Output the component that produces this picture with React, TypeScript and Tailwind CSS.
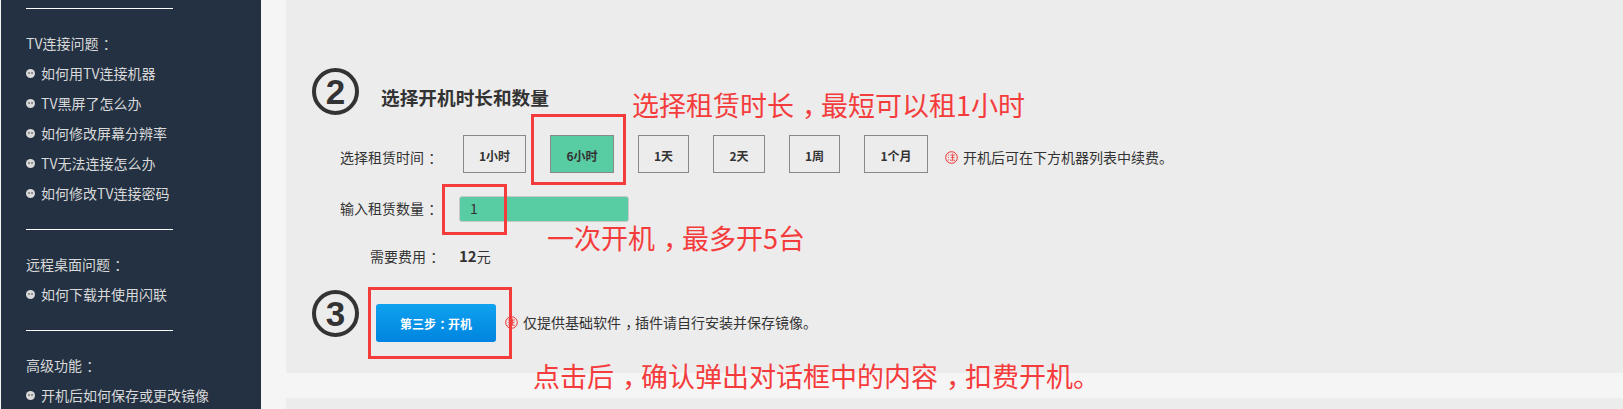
import React from "react";

const cjk = "font-['Microsoft_YaHei','Noto_Sans_CJK_SC','Noto_Sans',sans-serif]";

const sideGroups = [
  {
    title: "TV连接问题：",
    items: ["如何用TV连接机器", "TV黑屏了怎么办", "如何修改屏幕分辨率", "TV无法连接怎么办", "如何修改TV连接密码"],
  },
  { title: "远程桌面问题：", items: ["如何下载并使用闪联"] },
  { title: "高级功能：", items: ["开机后如何保存或更改镜像"] },
];

const durations = [
  { label: "1小时", width: "w-[63px]", margin: "mr-[24px]" },
  { label: "6小时", width: "w-[64px]", margin: "mr-[24px]", active: true },
  { label: "1天", width: "w-[51px]", margin: "mr-[24px]" },
  { label: "2天", width: "w-[52px]", margin: "mr-[24px]" },
  { label: "1周", width: "w-[51px]", margin: "mr-[24px]" },
  { label: "1个月", width: "w-[64px]", margin: "mr-[17px]" },
];

// the reference's font sets ，and ： in the middle of their cell
const Punct = ({ text }: { text: string }) => (
  <>
    {text.split(/([，：])/).map((part, i) =>
      part === "，" || part === "：" ? (
        <span key={i} className="inline-block translate-x-[0.3em]">
          {part}
        </span>
      ) : (
        part
      ),
    )}
  </>
);

const NoteIcon = () => (
  <svg width="13" height="13" viewBox="0 0 13 13" className="shrink-0">
    <circle cx="6.5" cy="6.5" r="5.8" fill="none" stroke="#ef2d2d" strokeWidth="1" />
    <path
      d="M3 3.6l1 .8M2.8 6l1 .7M3 9.6l1-1.4M5.4 4h4.4M5.7 6.4h3.8M5 9.2h5M7.6 4v5.2M7 2.6l1 .8"
      stroke="#ef2d2d"
      strokeWidth="0.8"
      fill="none"
    />
  </svg>
);

const StepCircle = ({ n }: { n: number }) => (
  <div className="flex h-[47px] w-[47px] shrink-0 items-center justify-center rounded-full border-[4px] border-[#333] font-['Liberation_Sans',sans-serif] text-[35px] font-bold leading-none text-[#333]">
    {n}
  </div>
);

export default function App() {
  return (
    <div className={`relative flex h-[409px] w-[1623px] overflow-hidden bg-[#f5f5f5] text-[14px] ${cjk}`}>
      <aside className="ml-px h-full w-[260px] shrink-0 overflow-hidden bg-[#233142] pl-[25px] text-[#d9d9d9]">
        {sideGroups.map((group) => (
          <div key={group.title}>
            <div className="mt-[8px] mb-[20px] h-px w-[147px] bg-white" />
            <div className="h-[29px] leading-[29px]">
              <Punct text={group.title} />
            </div>
            {group.items.map((item) => (
              <div key={item} className="flex h-[30px] items-center">
                <span className="mr-[6px] flex h-[9px] w-[9px] items-center justify-center gap-px rounded-full bg-[#d9d9d9]">
                  <span className="h-[2px] w-[2px] rounded-full bg-[#777]" />
                  <span className="h-[2px] w-[2px] rounded-full bg-[#777]" />
                </span>
                {item}
              </div>
            ))}
            <div className="h-[13px]" />
          </div>
        ))}
      </aside>

      <main className="ml-[25px] flex-1">
        <section className="h-[373px] bg-[#ececec] pt-[68px] pl-[26px] text-[#333]">
          <div className="flex items-center">
            <StepCircle n={2} />
            <h2 className="ml-[22px] mt-[11px] text-[18.67px] font-bold leading-none">选择开机时长和数量</h2>
          </div>

          <div className="mt-[20px] flex h-[38px] items-center">
            <label className="ml-[28px] w-[123px] pt-[7px]">
              <Punct text="选择租赁时间：" />
            </label>
            {durations.map((d) => (
              <button
                key={d.label}
                className={`flex h-[38px] items-center justify-center border border-[#888] pt-[4px] text-[12px] font-bold ${d.width} ${d.margin} ${d.active ? "bg-[#58cca2]" : ""}`}
              >
                {d.label}
              </button>
            ))}
            <span className="flex items-center pt-[7px]">
              <NoteIcon />
              <span className="ml-[5px]">开机后可在下方机器列表中续费。</span>
            </span>
          </div>

          <div className="mt-[23px] flex h-[26px] items-center">
            <label className="ml-[28px] w-[119px] pb-[2px]">
              <Punct text="输入租赁数量：" />
            </label>
            <div className="h-[26px] w-[170px] rounded-[3px] border border-[#c8c8c8] bg-[#58cca2] pl-[10px] leading-[22px]">1</div>
          </div>

          <div className="mt-[22px] flex h-[24px] items-center">
            <label className="ml-[58px] w-[89px]">
              <Punct text="需要费用：" />
            </label>
            <span>
              <b className="text-[15px]">12</b>元
            </span>
          </div>

          <div className="mt-[22px] flex items-start">
            <StepCircle n={3} />
            <button className="ml-[17px] mt-[14px] h-[38px] w-[120px] rounded-[3px] bg-gradient-to-b from-[#10a2ee] to-[#0084e0] pt-[1px] text-[12px] font-bold text-white">
              <Punct text="第三步：开机" />
            </button>
            <span className="ml-[9px] mt-[13px] flex h-[38px] items-center">
              <NoteIcon />
              <span className="ml-[5px]">
                <Punct text="仅提供基础软件，插件请自行安装并保存镜像。" />
              </span>
            </span>
          </div>
        </section>
        <div className="h-[25px] bg-[#f5f5f5]" />
        <div className="h-[11px] bg-[#ececec]" />
      </main>

      {/* red annotations pasted over the page */}
      <div className="absolute left-[531px] top-[114px] h-[71px] w-[95px] border-[3px] border-[#f53c3c]" />
      <div className="absolute left-[442px] top-[184px] h-[51px] w-[65px] border-[3px] border-[#f53c3c]" />
      <div className="absolute left-[368px] top-[287px] h-[72px] w-[144px] border-[3px] border-[#f53c3c]" />
      <div className="absolute left-[632px] top-[86px] whitespace-nowrap text-[27px] leading-[38px] text-[#f53c3c]">
        <Punct text="选择租赁时长，最短可以租1小时" />
      </div>
      <div className="absolute left-[547px] top-[219px] whitespace-nowrap text-[27px] leading-[38px] text-[#f53c3c]">
        <Punct text="一次开机，最多开5台" />
      </div>
      <div className="absolute left-[533px] top-[357px] whitespace-nowrap text-[27px] leading-[38px] text-[#f53c3c]">
        <Punct text="点击后，确认弹出对话框中的内容，扣费开机。" />
      </div>
    </div>
  );
}
